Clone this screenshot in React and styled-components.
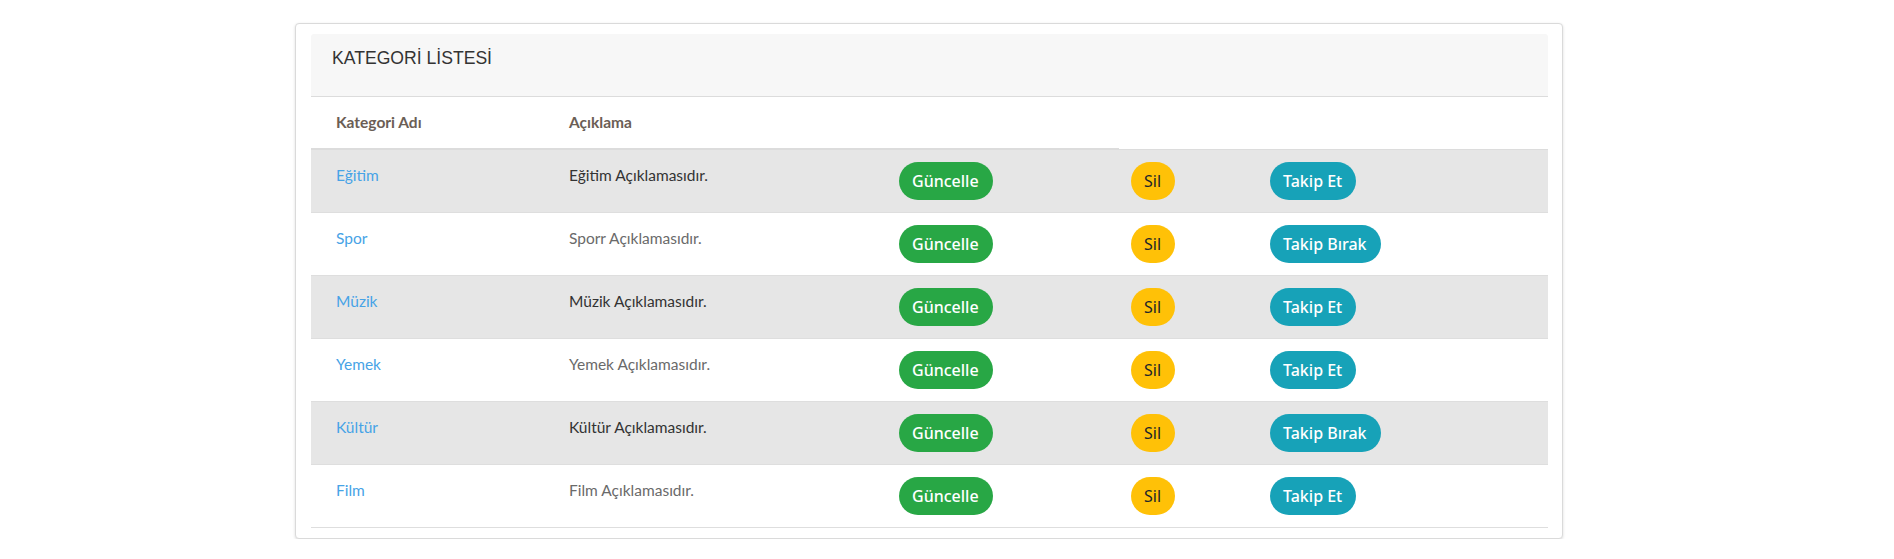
import React from "react";
import styled, { createGlobalStyle } from "styled-components";

const Global = createGlobalStyle`
  html, body { margin: 0; padding: 0; background: #ffffff; }
  body { font-family: Lato, "Noto Sans", sans-serif; font-size: 16px; }
  * { box-sizing: border-box; }
`;

const Page = styled.div`
  padding: 23px 0 0 295px;
`;

const Card = styled.div`
  width: 1268px;
  border: 1px solid #dadada;
  border-radius: 4px;
  box-shadow: 0 1px 3px rgba(0, 0, 0, 0.14);
  background: #fff;
  padding: 10px 14px 10px 15px;
`;

const CardHeader = styled.div`
  background: #f7f7f7;
  border-bottom: 1px solid #dcdcdc;
  border-radius: 3px 3px 0 0;
  height: 63px;
  padding: 14px 21px 0;
`;

const Title = styled.h5`
  margin: 0;
  font-family: "Liberation Sans", Arial, sans-serif;
  font-weight: 400;
  font-size: 17.6px;
  line-height: 21px;
  color: #333;
`;

const HeadRow = styled.div`
  display: flex;
  height: 53px;
`;

const HeadGroup = styled.div`
  width: 808px;
  display: grid;
  grid-template-columns: 233px 330px 1fr;
  padding-left: 13px;
  border-bottom: 2px solid #dcdcdc;
`;

const HeadFill = styled.div`
  flex: 1;
  border-bottom: 1px solid #dcdcdc;
`;

const Th = styled.div`
  padding: 13px 12px 0;
  line-height: 24px;
  font-weight: 700;
  font-size: 15.5px;
  color: #6b5e55;
`;

const Row = styled.div`
  display: grid;
  grid-template-columns: 233px 330px 232px 139px 1fr;
  align-items: start;
  height: 63px;
  padding: 12px 0 0 13px;
  border-bottom: 1px solid #dedede;
  background: ${(p) => (p.$striped ? "#e6e6e6" : "#ffffff")};
  color: ${(p) => (p.$striped ? "#333333" : "#6a6a6a")};
`;

const Td = styled.div`
  padding: 1px 12px 0;
  line-height: 24px;
  font-size: 15.5px;
`;

const BtnCell = styled.div`
  padding: 0 12px;
`;

const NameLink = styled.a`
  color: #47a3e6;
  text-decoration: none;
`;

const variants = {
  success: { bg: "#28a745", fg: "#ffffff" },
  warning: { bg: "#ffc107", fg: "#212529" },
  info: { bg: "#17a2b8", fg: "#ffffff" },
};

const Btn = styled.button`
  display: inline-block;
  height: 38px;
  padding: 0 14px 0 13px;
  border: 0;
  border-radius: 19px;
  font-family: "Noto Sans", "Open Sans", sans-serif;
  font-size: 16px;
  font-weight: ${(p) => (p.$variant === "warning" ? 400 : 500)};
  line-height: 38px;
  background: ${(p) => variants[p.$variant].bg};
  color: ${(p) => variants[p.$variant].fg};
  cursor: pointer;
`;

const rows = [
  { name: "Eğitim", desc: "Eğitim Açıklamasıdır.", follow: "Takip Et" },
  { name: "Spor", desc: "Sporr Açıklamasıdır.", follow: "Takip Bırak" },
  { name: "Müzik", desc: "Müzik Açıklamasıdır.", follow: "Takip Et" },
  { name: "Yemek", desc: "Yemek Açıklamasıdır.", follow: "Takip Et" },
  { name: "Kültür", desc: "Kültür Açıklamasıdır.", follow: "Takip Bırak" },
  { name: "Film", desc: "Film Açıklamasıdır.", follow: "Takip Et" },
];

export default function App() {
  return (
    <>
      <Global />
      <Page>
        <Card>
          <CardHeader>
            <Title>KATEGORİ LİSTESİ</Title>
          </CardHeader>
          <HeadRow>
            <HeadGroup>
              <Th>Kategori Adı</Th>
              <Th>Açıklama</Th>
              <Th />
            </HeadGroup>
            <HeadFill />
          </HeadRow>
          {rows.map((r, i) => (
            <Row key={r.name} $striped={i % 2 === 0}>
              <Td>
                <NameLink href="#">{r.name}</NameLink>
              </Td>
              <Td>{r.desc}</Td>
              <BtnCell>
                <Btn $variant="success">Güncelle</Btn>
              </BtnCell>
              <BtnCell>
                <Btn $variant="warning">Sil</Btn>
              </BtnCell>
              <BtnCell>
                <Btn $variant="info">{r.follow}</Btn>
              </BtnCell>
            </Row>
          ))}
        </Card>
      </Page>
    </>
  );
}
